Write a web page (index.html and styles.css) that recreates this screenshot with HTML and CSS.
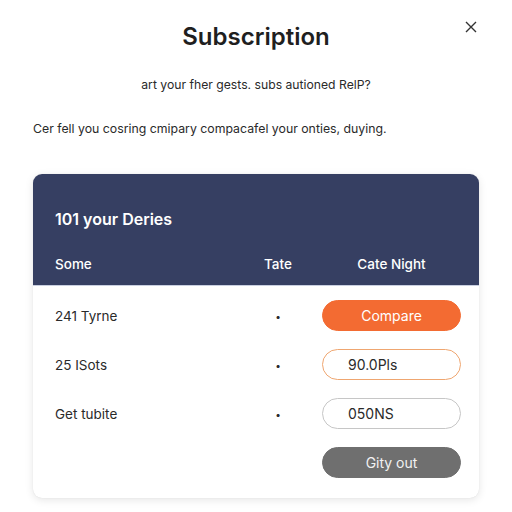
FILE: index.html
```html
<!DOCTYPE html>
<html lang="en">
<head>
<meta charset="utf-8">
<title>Subscription</title>
<link rel="stylesheet" href="styles.css">
</head>
<body>
<div class="modal">
  <button class="close" aria-label="Close">
    <svg width="12" height="12" viewBox="0 0 12 12"><path d="M1 1L11 11M11 1L1 11" stroke="#333" stroke-width="1.4" fill="none"/></svg>
  </button>
  <h1 class="title">Subscription</h1>
  <p class="subtitle">art your fher gests. subs autioned RelP?</p>
  <p class="lead">Cer fell you cosring cmipary compacafel your onties, duying.</p>

  <section class="card">
    <header class="card-head">
      <h2 class="card-title">101 your Deries</h2>
      <div class="grid cols">
        <span>Some</span>
        <span class="mid">Tate</span>
        <span class="right">Cate Night</span>
      </div>
    </header>
    <div class="card-body">
      <div class="grid row">
        <span>241 Tyrne</span>
        <span class="mid dot">•</span>
        <button class="btn btn-primary">Compare</button>
      </div>
      <div class="grid row">
        <span>25 ISots</span>
        <span class="mid dot">•</span>
        <button class="btn btn-outline-orange">90.0Pls</button>
      </div>
      <div class="grid row">
        <span>Get tubite</span>
        <span class="mid dot">•</span>
        <button class="btn btn-outline">050NS</button>
      </div>
      <div class="grid row">
        <span></span>
        <span></span>
        <button class="btn btn-dark">Gity out</button>
      </div>
    </div>
  </section>
</div>
</body>
</html>
```
FILE: styles.css
```css
* { box-sizing: border-box; }

html, body {
  margin: 0;
  padding: 0;
  background: #ffffff;
}

body {
  font-family: Inter, "Noto Sans", "Liberation Sans", sans-serif;
  color: #222;
}

.modal {
  position: relative;
  width: 512px;
  height: 512px;
  padding: 23px 33px 0;
}

.close {
  position: absolute;
  top: 21px;
  right: 35px;
  border: 0;
  background: none;
  padding: 0;
  width: 12px;
  height: 12px;
  display: flex;
}

.title {
  margin: 0;
  text-align: center;
  font-size: 24px;
  line-height: 28px;
  font-weight: 600;
  color: #1f1f1f;
}

.subtitle {
  margin: 25px 0 0;
  text-align: center;
  font-size: 12.2px;
  line-height: 18px;
  color: #2a2a2a;
}

.lead {
  margin: 26px 0 0;
  font-size: 12.3px;
  line-height: 18px;
  color: #2a2a2a;
}

.card {
  margin-top: 36px;
  width: 446px;
  border-radius: 9px;
  background: #fff;
  box-shadow: 0 2px 8px rgba(0, 0, 0, 0.10), 0 0 1px rgba(0, 0, 0, 0.12);
  overflow: hidden;
}

.card-head {
  background: #363f62;
  color: #fff;
  padding: 35px 18px 11px 22px;
  border-bottom: 1px solid #c9cfe0;
}

.card-title {
  margin: 0;
  font-size: 16px;
  line-height: 20px;
  font-weight: 600;
}

.grid {
  display: grid;
  grid-template-columns: 1fr 64px 139px;
  column-gap: 12px;
  align-items: center;
}

.cols {
  margin-top: 25px;
  font-size: 13.5px;
  line-height: 20px;
  font-weight: 500;
}

.mid, .right { text-align: center; }

.card-body {
  padding: 14px 18px 20px 22px;
  display: flex;
  flex-direction: column;
  gap: 18px;
  font-size: 13.5px;
  color: #2a2a2a;
}

.dot { font-size: 10px; }

.btn {
  height: 31px;
  border-radius: 16px;
  font-family: inherit;
  font-size: 14px;
  padding: 0;
  background: #fff;
  color: #2a2a2a;
}

.btn-primary {
  background: #f36b32;
  border: 1px solid #f36b32;
  color: #fff;
}

.btn-outline-orange,
.btn-outline {
  text-align: left;
  padding-left: 25px;
}

.btn-outline-orange {
  border: 1px solid #efa670;
}

.btn-outline {
  border: 1px solid #c6c6c6;
}

.btn-dark {
  background: #6f6f6f;
  border: 1px solid #6f6f6f;
  color: #f2f2f2;
}
```
